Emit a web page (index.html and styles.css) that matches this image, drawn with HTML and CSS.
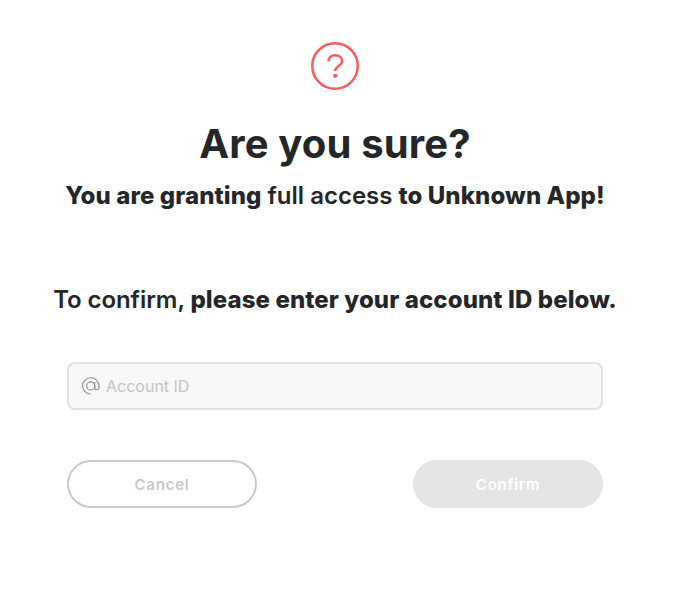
FILE: index.html
```html
<!DOCTYPE html>
<html lang="en">
<head>
<meta charset="utf-8">
<title>Are you sure?</title>
<link rel="stylesheet" href="styles.css">
</head>
<body>
<main class="dialog">
  <svg class="icon" viewBox="0 0 48 48" fill="none" stroke="#ff585d" stroke-width="2.5" stroke-linejoin="round">
    <circle cx="24" cy="24" r="22.75"/>
    <path d="M17.400 19.500c0-3.700 2.700-6.200 6.700-6.200s7 2.300 7 5.800c0 5.300-7 4.400-7 10"/>
    <circle cx="24.200" cy="33.800" r="2.100" fill="#ff585d" stroke="none"/>
  </svg>
  <h1 class="title">Are you sure?</h1>
  <p class="lead"><b>You are granting</b> full access <b>to Unknown App!</b></p>
  <p class="prompt">To confirm, <b>please enter your account ID below.</b></p>
  <label class="field">
    <svg class="at" viewBox="0 0 18 18" fill="none" stroke="#8d8d8d" stroke-width="1.1">
      <circle cx="8.700" cy="8.900" r="4"/>
      <path d="M12.700 5V10.300c0 1.600.8 2.500 2.100 2.500 1.500 0 2.200-1.200 2.200-3.300V8.800a8.200 8.100 0 1 0-8.200 8.200"/>
    </svg>
    <input class="input" type="text" placeholder="Account ID">
  </label>
  <div class="actions">
    <button class="button cancel">Cancel</button>
    <button class="button confirm">Confirm</button>
  </div>
</main>
</body>
</html>
```
FILE: styles.css
```css
* { box-sizing: border-box; }
body { margin: 0; background: #fff; color: #24272a; font-family: Inter, sans-serif; }
.dialog { width: 670px; padding-top: 42px; display: flex; flex-direction: column; align-items: center; }
.icon { width: 48px; height: 48px; }
.title { margin: 30px 0 0; font-size: 40px; line-height: 48px; font-weight: 700; letter-spacing: .15px; white-space: nowrap; }
.lead, .prompt { margin: 12px 0 0; font-size: 24px; line-height: 32px; font-weight: 600; letter-spacing: 0; white-space: nowrap; }
.prompt { margin-top: 72px; letter-spacing: -.08px; }
.lead b, .prompt b { font-weight: 800; letter-spacing: .1px; }
.field { margin-top: 46px; width: 536px; height: 48px; border: 2px solid #e2e2e2; border-radius: 8px; background: #f8f8f8; display: flex; align-items: center; padding-left: 13px; gap: 6px; }
.at { width: 18px; height: 18px; flex: none; }
.input { flex: 1; min-width: 0; border: 0; padding: 0; background: none; outline: 0; font: 400 16px/24px Inter, sans-serif; }
.input::placeholder { color: #c4c4c4; opacity: 1; }
.actions { margin-top: 50px; width: 536px; display: flex; justify-content: space-between; }
.button { width: 190px; height: 48px; padding: 2px 0 0; border-radius: 24px; border: 2px solid #cacaca; background: #fff; color: #cacaca; font: 600 15px/20px Inter, sans-serif; letter-spacing: .8px; }
.confirm { border-color: #e5e5e5; background: #e5e5e5; color: #fff; }
```
